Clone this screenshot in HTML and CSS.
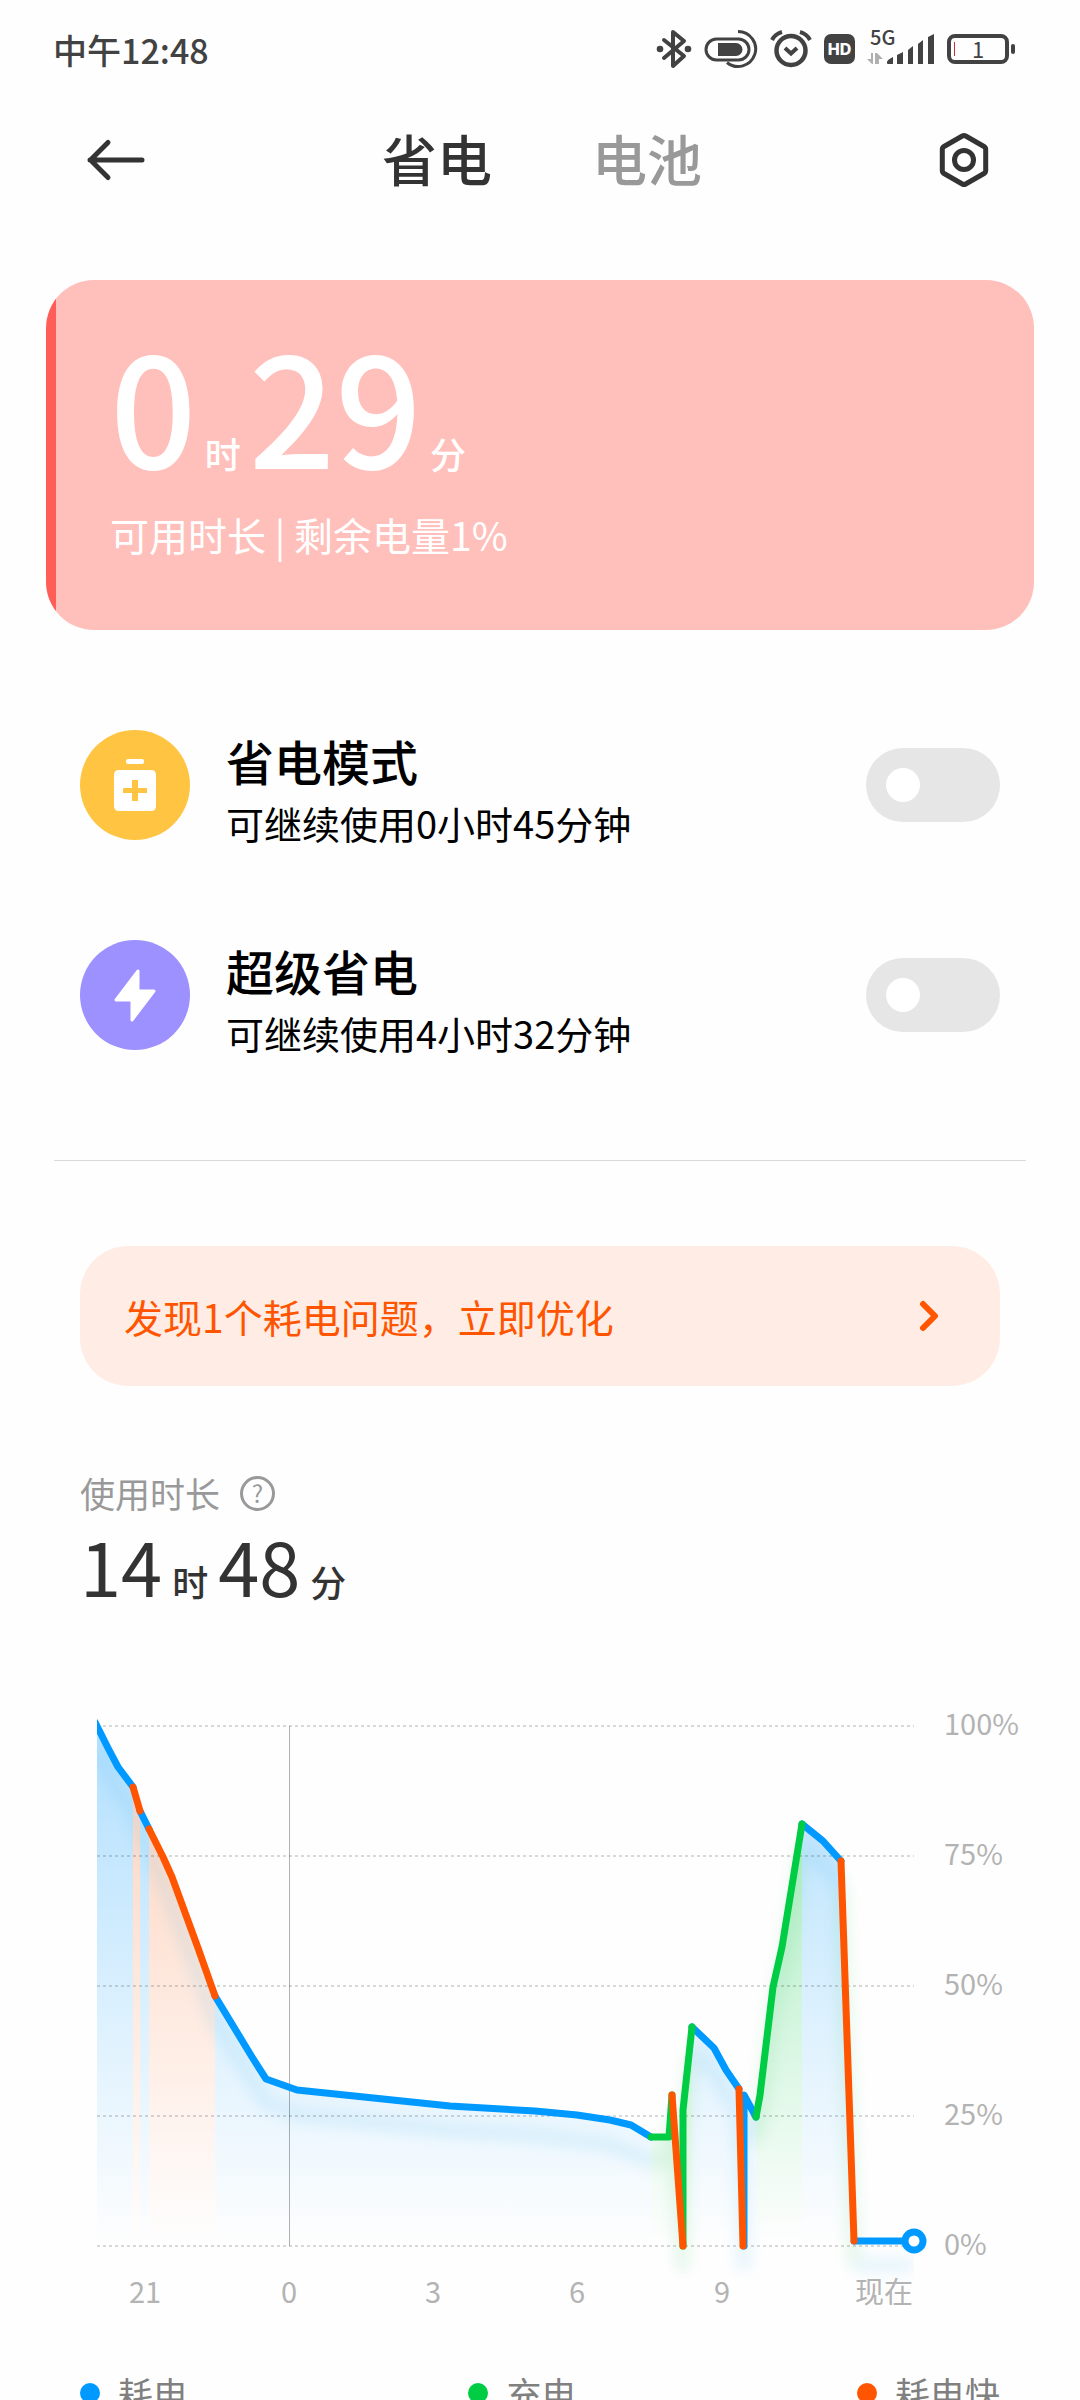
FILE: index.html
```html
<!DOCTYPE html>
<html lang="zh-CN">
<head>
<meta charset="utf-8">
<meta name="viewport" content="width=device-width, initial-scale=1">
<title>省电</title>
<link rel="stylesheet" href="styles.css">
</head>
<body>
<div class="screen">
  <div class="status">
    <span class="status-time">中午12:48</span>
    <div class="status-icons">
      <svg class="icon-bluetooth" width="36" height="40" viewBox="0 0 36 40" fill="none" stroke="#424242" stroke-width="4" stroke-linejoin="round" stroke-linecap="round">
        <path d="M8 11 28 27 17 37V3l11 9L8 29"/>
        <g fill="#424242" stroke="none"><circle cx="4" cy="20" r="3.3"/><circle cx="32" cy="20" r="3.3"/></g>
      </svg>
      <svg class="icon-saver" width="54" height="40" viewBox="0 0 54 40" fill="none" stroke="#424242" stroke-width="3">
        <rect x="2" y="10" width="43" height="21" rx="10.500"/>
        <path d="M14 14h18a6.500 6.500 0 0 1 0 13H14z" fill="#424242" stroke="none"/>
        <path d="M34 2.500a17.500 17.500 0 1 1-11 31"/>
      </svg>
      <svg class="icon-alarm" width="42" height="40" viewBox="0 0 42 40" fill="none" stroke="#424242" stroke-width="4.500">
        <circle cx="21" cy="21.500" r="14.500"/>
        <path d="m15 19 6 5.500 6-5.500" stroke-width="4"/>
        <path d="M2 11q3-6 10-8M40 11q-3-6-10-8" stroke-width="4"/>
      </svg>
      <span class="hd">HD</span>
      <div class="network">
        <span class="network-type">5G</span>
        <svg width="68" height="32" viewBox="0 0 68 32" fill="#424242">
          <path d="M0 26h4v-6h2v11H5zM8 20h2v11H8zM10 20l6 6h-4v5h-2z" fill="#b0b0b0"/>
          <path d="M20 29q0-2 6-5v7h-5q-1 0-1-1zM30 22l6-3v12h-6zM41 17l5-4v18h-5zM51 11l5-4v24h-5zM61 4l6-3v30h-6z"/>
        </svg>
      </div>
      <div class="battery"><span class="battery-body">1</span></div>
    </div>
  </div>

  <header class="topbar">
    <button class="icon-button" type="button" aria-label="返回">
      <svg width="60" height="44" viewBox="0 0 60 44" fill="none" stroke="#333" stroke-width="5" stroke-linecap="round" stroke-linejoin="round"><path d="M56 22H4M22 4.500 4.500 22 22 39.500"/></svg>
    </button>
    <nav class="tabs">
      <a class="tab tab-active" href="#saver">省电</a>
      <a class="tab" href="#battery">电池</a>
    </nav>
    <button class="icon-button" type="button" aria-label="设置">
      <svg width="52" height="56" viewBox="0 0 52 56" fill="none" stroke="#333" stroke-width="5"><path d="M24.300 4q1.700-1 3.400 0L46 14.500q1.700 1 1.700 3V38.500q0 2-1.700 3L27.700 52q-1.700 1-3.400 0L6 41.500q-1.700-1-1.700-3V17.500q0-2 1.700-3z"/><circle cx="26" cy="28" r="9.500"/></svg>
    </button>
  </header>

  <main class="content" id="saver">
    <section class="remaining">
      <p class="duration duration-large"><span>0</span><small>时</small><span>29</span><small>分</small></p>
      <p class="remaining-note">可用时长 | 剩余电量1%</p>
    </section>

    <section class="modes">
      <div class="mode">
        <span class="mode-icon mode-icon-saver">
          <svg width="42" height="54" viewBox="0 0 42 54" fill="#fff"><rect x="12" y="1" width="18" height="5" rx="2"/><path fill-rule="evenodd" d="M5 12h32q5 0 5 5v31q0 5-5 5H5q-5 0-5-5V17q0-5 5-5zM18 22v8h-8q-1 0-1 1v4h9v8h6v-8h9v-5h-9v-8z"/></svg>
        </span>
        <label class="mode-text" for="saver-mode"><span class="mode-title">省电模式</span><span class="mode-note">可继续使用0小时45分钟</span></label>
        <input class="switch" type="checkbox" role="switch" id="saver-mode">
      </div>
      <div class="mode">
        <span class="mode-icon mode-icon-super">
          <svg width="42" height="54" viewBox="0 0 42 54" fill="#fff" stroke="#fff" stroke-width="3" stroke-linejoin="round"><path d="M24 3v20h16L18 52V32H2z"/></svg>
        </span>
        <label class="mode-text" for="super-mode"><span class="mode-title">超级省电</span><span class="mode-note">可继续使用4小时32分钟</span></label>
        <input class="switch" type="checkbox" role="switch" id="super-mode">
      </div>
    </section>

    <hr class="divider">

    <a class="issue" href="#optimize">
      <span>发现1个耗电问题，立即优化</span>
      <svg width="22" height="32" viewBox="0 0 22 32" fill="none" stroke="#ff5500" stroke-width="6" stroke-linecap="round" stroke-linejoin="round"><path d="m5 4 12 12L5 28"/></svg>
    </a>

    <section class="usage">
      <h2 class="usage-title">使用时长
        <button class="help" type="button" aria-label="说明">?</button>
      </h2>
      <p class="duration"><span>14</span><small>时</small><span>48</span><small>分</small></p>
    </section>

    <div class="chart-wrap">
      <svg class="chart" viewBox="0 0 920 610" role="img" aria-label="电量曲线">
        <defs>
          <linearGradient id="fill-blue" gradientUnits="userSpaceOnUse" x1="0" y1="20" x2="0" y2="540"><stop stop-color="#0099ff" stop-opacity=".3"/><stop offset="1" stop-color="#0099ff" stop-opacity="0"/></linearGradient>
          <linearGradient id="fill-orange" gradientUnits="userSpaceOnUse" x1="0" y1="20" x2="0" y2="540"><stop stop-color="#ff5500" stop-opacity=".26"/><stop offset="1" stop-color="#ff5500" stop-opacity="0"/></linearGradient>
          <linearGradient id="fill-green" gradientUnits="userSpaceOnUse" x1="0" y1="80" x2="0" y2="540"><stop stop-color="#00cc44" stop-opacity=".34"/><stop offset="1" stop-color="#00cc44" stop-opacity="0"/></linearGradient>
          <filter id="soft" filterUnits="userSpaceOnUse" x="-40" y="-20" width="960" height="660"><feGaussianBlur stdDeviation="7"/></filter>
          <clipPath id="plot"><rect x="0" y="0" width="817" height="610"/></clipPath>
        </defs>

        <g fill="url(#fill-blue)">
          <path d="M0 20 21 61 36 81V540H0zM43 105l9 18V540h-9zM118 290l51 83 31 11 153 16 85 5 79 10 37 15V540H118zM595 321l22 21 12 22 13 19V540h-47zM647 389l12 22V540h-12zM705 118l21 17 18 20 13 380v5h-52z"/>
        </g>
        <path fill="url(#fill-orange)" d="M36 81l7 24V540h-7zM52 123l14 28 35 93 17 46V540H52z"/>
        <path fill="url(#fill-green)" d="M554 431h18l3-42 11 151h-32zM586 404l9-83V540h-9zM659 411l4-22 13-108 9-40 20-123V540h-46z"/>

        <g class="shadow" clip-path="url(#plot)">
          <g filter="url(#soft)" transform="translate(0 24)">
            <path stroke="#35aee8" d="M0 20 21 61 36 81 43 105 52 123 66 151 101 244 118 290 169 373 200 384 353 400 438 405 513 415 554 431M595 321l22 21 12 22 13 19 5 157M647 389l12 22M705 118l21 17 18 20M757 535h60"/>
            <path stroke="#3cc667" d="M554 431h18l3-42 11 151V404l9-83M659 411l4-22 13-108 9-40 20-123M744 155l13 380"/>
          </g>
        </g>

        <g class="grid">
          <path d="M0 20H817M0 150H817M0 280H817M0 410H817M0 540H817" stroke-dasharray="3 3"/>
          <path d="M192.500 20V540"/>
        </g>

        <g class="line line-blue" clip-path="url(#plot)">
          <path d="M-2 16 0 20 11 42 21 61 36 81M43 105l9 18M118 290l37 61 14 22 31 11 153 16 85 5 42 4 33 5 21 5 20 12M595 321l22 21 12 22 13 19M647 540V389l12 22M705 118l21 17 18 20M757 535h60"/>
        </g>
        <path class="line line-green" d="M554 431h18l3-42M586 540V404l9-83M659 411l4-22 13-108 9-40 20-123"/>
        <path class="line line-orange" d="M36 81l7 24M52 123l14 28 9 20 26 71 17 48M575 389l11 151M642 383l4 157M744 155l13 380"/>
        <circle class="now" cx="817" cy="535" r="9"/>

        <g class="tick">
          <text x="847" y="29">100%</text>
          <text x="847" y="159">75%</text>
          <text x="847" y="289">50%</text>
          <text x="847" y="419">25%</text>
          <text x="847" y="549">0%</text>
        </g>
        <g class="tick tick-time">
          <text x="48" y="597">21</text>
          <text x="192" y="597">0</text>
          <text x="336" y="597">3</text>
          <text x="480" y="597">6</text>
          <text x="625" y="597">9</text>
          <text x="787" y="597">现在</text>
        </g>
      </svg>
    </div>

    <ul class="legend">
      <li><i class="dot dot-blue"></i>耗电</li>
      <li><i class="dot dot-green"></i>充电</li>
      <li><i class="dot dot-orange"></i>耗电快</li>
    </ul>
  </main>
</div>
</body>
</html>
```
FILE: styles.css
```css
* { box-sizing: border-box; }

body {
  margin: 0;
  background: #fefefe;
  color: #333;
  font-family: "Noto Sans CJK SC", sans-serif;
}

p, h2, ul { margin: 0; padding: 0; font-weight: 400; }
a { color: inherit; text-decoration: none; }
button { padding: 0; border: 0; background: none; color: inherit; font: inherit; }
svg { display: block; flex: none; }

.screen {
  display: flex;
  flex-direction: column;
  height: 100vh;
  overflow: hidden;
}

/* status bar */
.status {
  display: flex;
  flex: none;
  align-items: center;
  justify-content: space-between;
  height: 98px;
  padding: 0 65px 0 53px;
  color: #424242;
}
.status-time { font-size: 34px; font-weight: 500; }
.status-icons { display: flex; align-items: center; gap: 12px; }
.hd {
  width: 31px;
  height: 30px;
  border-radius: 7px;
  background: #424242;
  color: #fff;
  font: 800 16px/30px Inter, sans-serif;
  text-align: center;
}
.network { position: relative; }
.network-type {
  position: absolute;
  top: -6px;
  left: 3px;
  font: 500 20px/20px "Noto Sans CJK SC", sans-serif;
}
.battery { display: flex; align-items: center; gap: 2px; }
.battery::after {
  content: "";
  width: 4px;
  height: 10px;
  border-radius: 2px;
  background: #424242;
}
.battery-body {
  position: relative;
  width: 62px;
  height: 30px;
  border: 4px solid #424242;
  border-radius: 8px;
  font-size: 22px;
  line-height: 20px;
  text-align: center;
}
.battery-body::before {
  content: "";
  position: absolute;
  top: 4px;
  left: 3px;
  width: 1px;
  height: 14px;
  background: #c03038;
}

/* title bar */
.topbar {
  display: flex;
  flex: none;
  align-items: center;
  justify-content: space-between;
  height: 122px;
  padding: 2px 90px 0 86px;
}
.tabs { display: flex; gap: 100px; padding-bottom: 6px; }
.tab { color: #999; font-size: 55px; font-weight: 500; line-height: 80px; }
.tab-active { color: #333; }

.content {
  flex: 1;
  min-height: 0;
  padding: 60px 0 0;
  overflow-y: auto;
  scrollbar-width: none;
}

/* remaining time */
.remaining {
  margin: 0 46px;
  padding: 47px 64px 68px;
  border-radius: 48px;
  background: linear-gradient(90deg, #ff5d57 1%, #ffbfbb 1%);
  color: #fff;
}
.remaining-note { margin-top: 27px; font-size: 39px; line-height: 56px; }
.duration {
  display: flex;
  align-items: baseline;
  gap: 10px;
  font-size: 74px;
  line-height: 1;
}
.duration small { font-size: 36px; font-weight: 500; }
.duration-large { gap: 8px; font-size: 152px; font-weight: 500; }

/* power modes */
.modes {
  display: flex;
  flex-direction: column;
  gap: 80px;
  padding: 90px 80px 100px;
}
.mode { display: flex; align-items: center; gap: 36px; }
.mode-icon {
  display: grid;
  place-items: center;
  width: 110px;
  height: 110px;
  border-radius: 50%;
}
.mode-icon-saver { background: #ffc542; }
.mode-icon-super { background: #9c91ff; }
.mode-text {
  display: flex;
  flex: 1;
  flex-direction: column;
  padding-top: 4px;
  color: #000;
}
.mode-title { font-size: 48px; font-weight: 500; line-height: 72px; }
.mode-note { font-size: 38px; line-height: 54px; }
.switch {
  display: flex;
  align-items: center;
  width: 134px;
  height: 74px;
  margin: 0;
  padding: 0 20px;
  border-radius: 37px;
  background: #e6e6e6;
  appearance: none;
}
.switch::before {
  content: "";
  width: 34px;
  height: 34px;
  border-radius: 50%;
  background: #fff;
}
.switch:checked { justify-content: flex-end; background: #0099ff; }

.divider { height: 1px; margin: 0 54px; border: 0; background: #d9d9d9; }

.issue {
  display: flex;
  align-items: center;
  justify-content: space-between;
  margin: 85px 80px 0;
  padding: 40px 60px 40px 44px;
  border-radius: 48px;
  background: #ffede5;
  color: #ff5500;
  font-size: 39px;
  line-height: 60px;
}

/* usage time */
.usage { padding: 82px 80px 104px; }
.usage-title {
  display: flex;
  align-items: center;
  gap: 20px;
  margin-bottom: 10px;
  color: #999;
  font-size: 35px;
  line-height: 50px;
}
.help {
  width: 35px;
  height: 35px;
  border: 3px solid #999;
  border-radius: 50%;
  font-size: 24px;
  line-height: 28px;
}

/* battery chart */
.chart-wrap { padding: 0 63px 0 97px; }
.chart { width: 100%; height: auto; overflow: visible; }
.grid { fill: none; stroke: #000; stroke-opacity: .3; }
.shadow { fill: none; stroke-width: 14; opacity: .12; }
.line { fill: none; stroke-width: 7; stroke-linecap: round; stroke-linejoin: round; }
.line-blue { stroke: #0099ff; }
.line-green { stroke: #00cc44; }
.line-orange { stroke: #ff5500; }
.now { fill: #fff; stroke: #0099ff; stroke-width: 7; }
.tick { fill: #b3b3b3; font-size: 29px; }
.tick-time { text-anchor: middle; }

.legend {
  display: flex;
  justify-content: space-between;
  padding: 52px 80px 0;
  color: #808080;
  font-size: 35px;
  line-height: 50px;
  list-style: none;
}
.legend li { display: flex; align-items: center; gap: 18px; }
.dot { width: 20px; height: 20px; border-radius: 50%; }
.dot-blue { background: #0099ff; }
.dot-green { background: #00cc44; }
.dot-orange { background: #ff5500; }
```
